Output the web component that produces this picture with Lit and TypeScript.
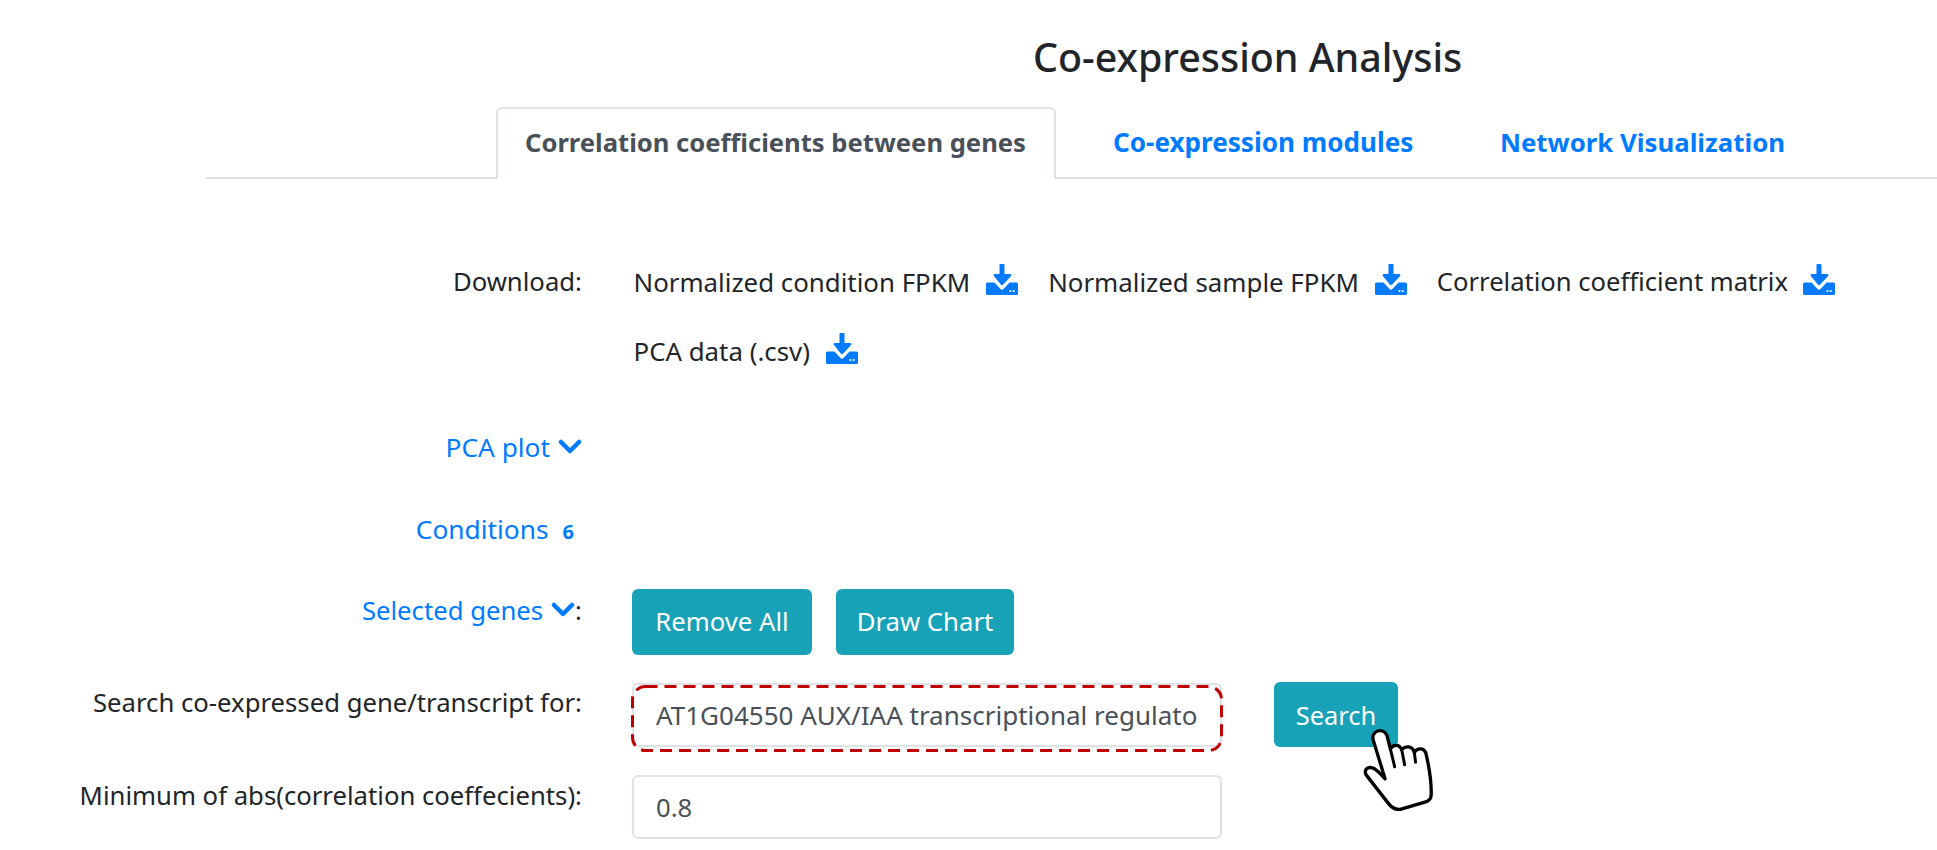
import { LitElement, html, css, svg } from "lit";
import { customElement } from "lit/decorators.js";

const dl = html`<svg class="dl" viewBox="0 0 32 31" aria-hidden="true"><path fill="#007bff" d="M14.500 0h3a1 1 0 0 1 1 1V10h5.800c1 0 1.500 1.200.8 1.900L17 20.700a1.500 1.500 0 0 1-2 0L7.900 11.900c-.7-.7-.2-1.900.8-1.900h4.800V1a1 1 0 0 1 1-1zM1.500 18.500H8.500l5.800 6.300a2.300 2.300 0 0 0 3.400 0l5.800-6.300h7a1.500 1.500 0 0 1 1.500 1.500v9.500a1.500 1.500 0 0 1-1.500 1.500h-29A1.500 1.500 0 0 1 0 29.500V20a1.500 1.500 0 0 1 1.500-1.500z"/><circle cx="24.500" cy="27" r="1.100" fill="#fff"/><circle cx="27.800" cy="27" r="1.100" fill="#fff"/></svg>`;
const chev = html`<svg class="chev" viewBox="0 0 24 15" aria-hidden="true"><path d="M3 3l9 9 9-9" fill="none" stroke="#007bff" stroke-width="4.500" stroke-linecap="round" stroke-linejoin="round"/></svg>`;
const hand = svg`<path d="M652 350C640 335 650 320 668 325 680 328 692 342 706 358L670 240C664 215 700 200 712 228L722 268C730 255 748 252 756 270 768 258 788 258 794 278 806 262 826 265 830 285 838 320 846 370 845 405 845 418 838 425 826 428L752 450C738 452 726 445 716 432Z" fill="#fff" stroke="#000" stroke-width="10" stroke-linejoin="round"/><path d="M722 268L735 322M756 270L765 316M794 278L798 308" fill="none" stroke="#000" stroke-width="9" stroke-linecap="round"/>`;

@customElement("app-root")
export class AppRoot extends LitElement {
  static styles = css`
    :host { display: block; width: 1937px; height: 850px; overflow: hidden; background: #fff; color: #212529;
      font-family: "Noto Sans", "Open Sans", sans-serif; font-size: 25.700px; line-height: 36px; }
    * { box-sizing: border-box; }
    h1 { margin: 0; padding: 32px 0 0 1033px; font-size: 39.400px; line-height: 50px; font-weight: 500; height: 107px; color: #212529; }
    .tabs { display: flex; margin-left: 206px; padding-left: 290px; border-bottom: 2px solid #dee2e6; height: 72px; }
    .tab { height: 72px; padding: 17px 0 0; font-weight: 700; font-size: 25.800px; color: #007bff; white-space: nowrap; }
    .tab.active { width: 560px; padding-left: 27px; padding-top: 16px; font-size: 25.600px; color: #495057; background: #fff; border: 2px solid #dee2e6; border-bottom: 0; border-radius: 6px 6px 0 0; height: 72px; }
    .tab.m { margin-left: 57px; width: 387px; font-size: 26.100px; }
    .rows { display: grid; grid-template-columns: 582px 1fr; column-gap: 50px; padding-top: 85px; }
    .label { text-align: right; white-space: nowrap; height: 36px; }
    .link { color: #007bff; }
    .wide { font-size: 26.300px; }
    .downloads { display: flex; flex-wrap: wrap; column-gap: 30px; row-gap: 32px; height: 105px; padding-left: 1.500px; font-size: 25.850px; }
    .item { display: inline-flex; align-items: center; gap: 16px; white-space: nowrap; height: 36px; }
    .item.tight { font-size: 25.600px; gap: 15px; }
    .dl { width: 32px; height: 31px; display: block; margin-top: -5px; }
    .chev { width: 24px; height: 15px; display: inline-block; margin-left: 8px; vertical-align: 3px; }
    .badge { display: inline-block; font-size: 20px; font-weight: 700; margin: 0 8px 0 14px; }
    .r-pca { margin-top: 60px; }
    .r-cond { margin-top: 46px; }
    .r-sel { margin-top: 46px; }
    .btns { display: flex; gap: 24px; margin-top: 42px; }
    .btn { height: 66px; padding: 0; width: 180px; justify-content: center; border: 0; border-radius: 6px; background: #17a2b8; color: #fff; font: inherit; display: flex; align-items: center; }
    .btn.draw { width: 178px; }
    .searchrow { display: flex; align-items: flex-start; gap: 52px; margin-top: 28px; }
    .field { position: relative; width: 590px; height: 64px; }
    input { display: block; width: 590px; height: 64px; padding: 0 22px; border: 2px solid #dee2e6; border-radius: 6px; color: #495057; font: inherit; background: #fff; outline: none; }
    .field input { font-size: 26px; }
    .dash { position: absolute; left: -1px; top: 2px; width: 592px; height: 67px; pointer-events: none; overflow: visible; }
    .searchwrap { position: relative; margin-top: -1px; }
    .searchwrap .btn { width: 124px; height: 65px; font-size: 25.500px; }
    .hand { position: absolute; left: 89px; top: 46px; width: 70px; height: 83px; }
    .r-search-l { margin-top: 30px; }
    .r-min-l { margin-top: 31px; }
    .r-min { margin-top: 28px; }
  `;

  render() {
    return html`
      <h1>Co-expression Analysis</h1>
      <nav class="tabs">
        <div class="tab active">Correlation coefficients between genes</div>
        <div class="tab m">Co-expression modules</div>
        <div class="tab">Network Visualization</div>
      </nav>
      <section class="rows">
        <div class="label">Download:</div>
        <div class="downloads">
          <span class="item">Normalized condition FPKM ${dl}</span>
          <span class="item">Normalized sample FPKM ${dl}</span>
          <span class="item tight">Correlation coefficient matrix ${dl}</span>
          <span class="item">PCA data (.csv) ${dl}</span>
        </div>
        <div class="label link wide r-pca">PCA plot${chev}</div><div></div>
        <div class="label link wide r-cond">Conditions<span class="badge">6</span></div><div></div>
        <div class="label r-sel"><span class="link">Selected genes${chev}</span>:</div>
        <div class="btns"><button class="btn">Remove All</button><button class="btn draw">Draw Chart</button></div>
        <div class="label r-search-l">Search co-expressed gene/transcript for:</div>
        <div class="searchrow">
          <div class="field">
            <input value="AT1G04550 AUX/IAA transcriptional regulator" />
            <svg class="dash" viewBox="0 0 592 67"><rect x="1.500" y="1.500" width="589" height="64" rx="13" fill="none" stroke="#c00000" stroke-width="3" stroke-dasharray="12 7"/></svg>
          </div>
          <div class="searchwrap">
            <button class="btn">Search</button>
            <svg class="hand" viewBox="640 205 210 250">${hand}</svg>
          </div>
        </div>
        <div class="label r-min-l">Minimum of abs(correlation coeffecients):</div>
        <div class="r-min"><input value="0.8" /></div>
      </section>
    `;
  }
}
